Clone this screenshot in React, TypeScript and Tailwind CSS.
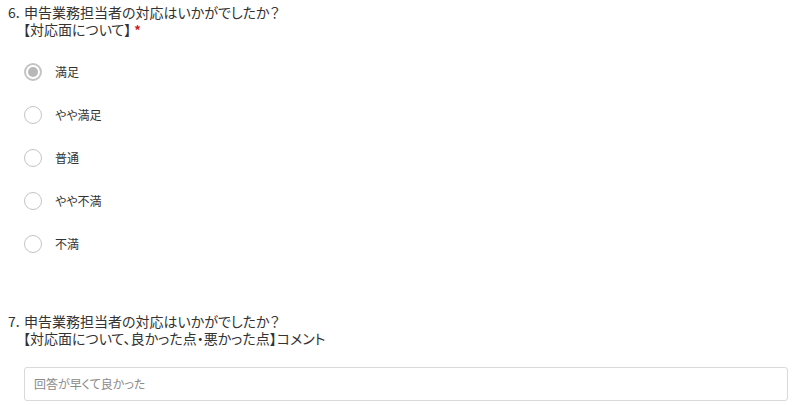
const options = ['満足', 'やや満足', '普通', 'やや不満', '不満']

function Radio({ checked }: { checked?: boolean }) {
  if (checked) {
    return (
      <span className="w-[18px] h-[18px] rounded-full border-2 border-[#c4c4c4] bg-white flex items-center justify-center">
        <span className="w-[10px] h-[10px] rounded-full bg-[#b8b8b8]" />
      </span>
    )
  }
  return <span className="w-[18px] h-[18px] rounded-full border border-[#c4c4c4] bg-white" />
}

function Question({ no, line1, line2, required }: { no: string; line1: string; line2: string; required?: boolean }) {
  return (
    <div className="flex text-[14px] leading-[17px] text-[#333]">
      <span className="w-[16px] shrink-0">{no}</span>
      <div>
        <div>{line1}</div>
        <div className="-ml-[1px]">
          {line2}
          {required && <span className="ml-[3px] text-[#d11a1a] text-[13px] font-bold">*</span>}
        </div>
      </div>
    </div>
  )
}

export default function App() {
  return (
    <div
      className="w-[799px] h-[405px] bg-white overflow-hidden pl-[8px] pr-[11px] pt-[4px] [font-feature-settings:'palt']"
      style={{ fontFamily: '"Noto Sans CJK JP", "Liberation Sans", sans-serif' }}
    >
      <Question
        no="6."
        line1="申告業務担当者の対応はいかがでしたか？"
        line2="【対応面について】"
        required
      />

      <div className="mt-[12px] pl-[16px]">
        {options.map((o, i) => (
          <label key={o} className="h-[43px] flex items-center gap-[13px]">
            <Radio checked={i === 0} />
            <span className="text-[12px] text-[#333]">{o}</span>
          </label>
        ))}
      </div>

      <div className="mt-[48px]">
        <Question
          no="7."
          line1="申告業務担当者の対応はいかがでしたか？"
          line2="【対応面について、良かった点・悪かった点】コメント"
        />
      </div>

      <div className="mt-[20px] ml-[16px] h-[34px] border border-[#d9d9d9] rounded-[3px] flex items-center px-[9px]">
        <span className="text-[12px] text-[#8a8a8a]">回答が早くて良かった</span>
      </div>
    </div>
  )
}
